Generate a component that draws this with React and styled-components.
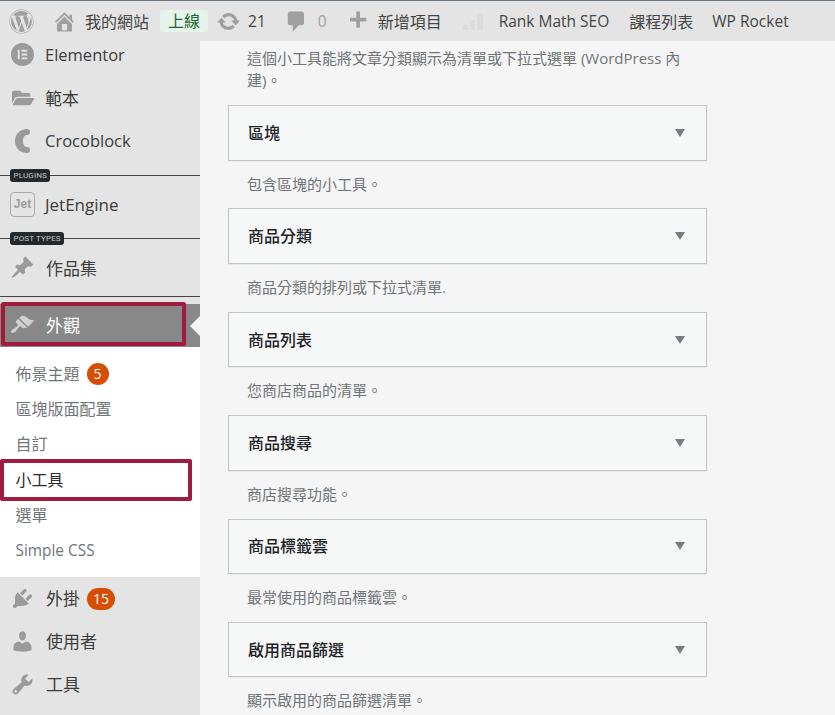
import React from "react";
import styled, { createGlobalStyle } from "styled-components";
import { FaWordpress, FaFolderOpen } from "react-icons/fa";
import { SiElementor } from "react-icons/si";

const Global = createGlobalStyle`
  html, body { margin: 0; padding: 0; background: #f5f5f5; }
  body { font-family: "Open Sans", "Noto Sans CJK TC", sans-serif; overflow: hidden; }
  #root { width: 835px; height: 715px; overflow: hidden; }
`;

const Page = styled.div`
  width: 835px;
  height: 715px;
  display: flex;
  flex-direction: column;
  overflow: hidden;
`;

const TopBar = styled.header`
  flex: 0 0 41px;
  box-sizing: border-box;
  border-top: 1px solid #6a7883;
  background: #e4e4e4;
  display: flex;
  align-items: center;
  padding-left: 9px;
  color: #454545;
  font-size: 16px;
`;

const BarItem = styled.div`
  display: flex;
  align-items: center;
  gap: ${p => p.$gap ?? 8}px;
  margin-left: ${p => p.$ml ?? 0}px;
  font-size: ${p => p.$latin ? "15.5px" : "16px"};
  color: ${p => p.$muted ? "#a0a0a0" : "inherit"};
  white-space: nowrap;
  svg { color: #a0a0a0; flex: none; }
`;

const LiveBadge = styled.span`
  margin-left: 11px;
  padding: 0 8px;
  height: 22px;
  line-height: 22px;
  border-radius: 3px;
  background: #e6f3ea;
  color: #1c6a33;
  font-size: 16px;
`;

const Body = styled.div`
  flex: 1;
  display: flex;
  min-height: 0;
`;

const Sidebar = styled.nav`
  flex: 0 0 200px;
  background: #e4e4e4;
  overflow: hidden;
  color: #3c3c3c;
  font-size: 17px;
`;

const SideInner = styled.div`
  margin-top: -8px;
`;

const Item = styled.div`
  position: relative;
  height: ${p => p.$h ?? 43}px;
  display: flex;
  align-items: center;
  box-sizing: border-box;
  font-size: ${p => p.$latin ? "16.5px" : "17px"};
  ${p => p.$active && `background: #888888; color: #fff;`}
`;

const Label = styled.span`
  margin-bottom: ${p => p.$up ? 2 : 0}px;
  margin-left: ${p => p.$nudge ? 1 : 0}px;
`;

const IconSlot = styled.span`
  flex: 0 0 45px;
  display: flex;
  justify-content: center;
  color: ${p => p.$active ? "#d0d0d0" : "#9a9a9a"};
`;

const Notch = styled.span`
  position: absolute;
  right: 0;
  top: 12px;
  border: 10px solid transparent;
  border-right-color: #f5f5f5;
  border-left-width: 0;
`;

const Highlight = styled.span`
  position: absolute;
  box-sizing: border-box;
  left: ${p => p.$l}px;
  top: ${p => p.$t}px;
  width: ${p => p.$w}px;
  height: ${p => p.$h}px;
  border: 4px solid #a11b3e;
  border-radius: 2px;
  pointer-events: none;
`;

const Separator = styled.div`
  position: relative;
  height: ${p => p.$h}px;
  &::before {
    content: "";
    position: absolute;
    left: 0;
    right: 0;
    top: ${p => p.$top}px;
    border-top: 1px solid #444;
  }
`;

const SepTag = styled.span`
  position: absolute;
  left: 10px;
  top: ${p => p.$top - 6}px;
  height: 13px;
  line-height: 13px;
  padding: 0 3.5px;
  border-radius: 3px;
  background: #23282d;
  color: #c4c4c4;
  font-family: Roboto, sans-serif;
  font-size: 8px;
  letter-spacing: 0.15px;
  white-space: nowrap;
`;

const Submenu = styled.div`
  background: #fff;
  padding: 9px 0 9px;
`;

const SubItem = styled.div`
  position: relative;
  height: 35.4px;
  display: flex;
  align-items: center;
  padding-left: 15.5px;
  gap: 7px;
  font-size: ${p => p.$latin ? "15.4px" : "16px"};
  color: ${p => p.$current ? "#2a2a2a" : "#70757a"};
`;

const Count = styled.span`
  display: inline-block;
  min-width: 22px;
  box-sizing: border-box;
  height: 22px;
  line-height: 22px;
  padding: 0 ${p => p.$wide ? 6 : 0}px;
  margin-left: ${p => p.$ml ?? 0}px;
  border-radius: 11px;
  background: #d54e04;
  color: #fff;
  font-size: 14px;
  text-align: center;
`;

const Main = styled.main`
  flex: 1;
  background: #f5f5f5;
  padding-left: 28px;
  overflow: hidden;
`;

const LeadText = styled.p`
  margin: 6px 0 0 19px;
  width: 436px;
  font-size: 15px;
  line-height: 22px;
  color: #6f7478;
`;

const WidgetList = styled.div`
  margin-top: 14px;
`;

const WidgetCard = styled.div`
  width: 479px;
  height: 55.5px;
  box-sizing: border-box;
  background: #f6f7f7;
  border: 1px solid #c3c4c7;
  box-shadow: 0 1px 1px rgba(0,0,0,.04);
  padding: 0 21px 0 19px;
  display: flex;
  align-items: center;
  justify-content: space-between;
  font-size: 16px;
  font-weight: 500;
  color: #1d2327;
`;

const CardTitle = styled.span`
  margin-bottom: 2px;
`;

const Caret = styled.span`
  border-left: 5px solid transparent;
  border-right: 5px solid transparent;
  border-top: 8px solid #787c82;
`;

const Desc = styled.p`
  margin: 0 0 0 19px;
  height: 47.9px;
  line-height: 47px;
  font-size: 15px;
  color: #6f7478;
`;

const JetLogo = styled.span`
  width: 25px;
  height: 25px;
  box-sizing: border-box;
  border: 1px solid #a8a8a8;
  border-radius: 4px;
  font: 700 12px "Liberation Sans", sans-serif;
  color: #9c9c9c;
  display: flex;
  align-items: center;
  justify-content: center;
`;

const Dash = ({ d, size = 24, color = "currentColor" }) => (
  <svg width={size} height={size} viewBox="0 0 20 20" fill={color}><path d={d} /></svg>
);

const HOME = "M16 8.5l1.53 1.53-1.06 1.06L10 4.62l-6.47 6.47-1.06-1.06L10 2.5l4 4v-2h2v4zm-6-2.46l6 5.99V18H4v-5.97zM12 17v-5H8v5h4z";
const UPDATE = "M10.2 3.28c3.53 0 6.43 2.61 6.92 6h2.08l-3.5 4-3.5-4h2.32c-.45-1.97-2.21-3.45-4.32-3.45-1.45 0-2.73.71-3.54 1.78L4.95 5.66C6.23 4.2 8.11 3.28 10.2 3.28zm-.4 13.44c-3.52 0-6.43-2.61-6.92-6H.8l3.5-4c1.17 1.33 2.33 2.67 3.5 4H5.48c.45 1.97 2.21 3.45 4.32 3.45 1.45 0 2.73-.71 3.54-1.78l1.71 1.95c-1.28 1.46-3.15 2.38-5.25 2.38z";
const COMMENT = "M5 2h9c1.1 0 2 .9 2 2v7c0 1.1-.9 2-2 2h-2l-5 5v-5H5c-1.1 0-2-.9-2-2V4c0-1.1.9-2 2-2z";
const PLUS = "M17 7v3h-5v5H9v-5H4V7h5V2h3v5h5z";
const PIN = "M10.44 3.02l1.82-1.82 6.36 6.35-1.83 1.82c-1.05-.68-2.48-.57-3.41.36l-.75.75c-.92.93-1.04 2.35-.35 3.41l-1.83 1.82-2.41-2.41-2.8 2.79c-.42.42-3.38 2.71-3.8 2.29s1.86-3.39 2.28-3.81l2.79-2.79L4.1 9.36l1.83-1.82c1.05.69 2.48.57 3.4-.36l.75-.75c.93-.92 1.05-2.35.36-3.41z";
const BRUSH = "M14.48 11.06L7.41 3.99l1.5-1.5c.5-.56 2.3-.47 3.51.32 1.21.8 1.43 1.28 2.91 2.1 1.18.64 2.45 1.26 4.45.85zm-.71.71L6.7 4.7 4.93 6.47c-.39.39-.39 1.02 0 1.41l1.06 1.06c.39.39.39 1.03 0 1.42-.6.6-1.43 1.11-2.21 1.69-.35.26-.7.53-1.01.84C1.43 13.23.4 14.92 1.2 15.71c.79.8 2.48-.23 3.82-1.57.31-.31.58-.66.84-1.01.58-.78 1.09-1.61 1.69-2.21.39-.39 1.02-.39 1.41 0l1.06 1.06c.39.39 1.02.39 1.41 0z";
const PLUG = "M13.11 4.36L9.87 7.6 8 5.73l3.24-3.24c.35-.34 1.05-.2 1.56.32.52.51.66 1.21.31 1.55zm-8 1.77l.91-1.12 9.01 9.01-1.19.84c-.71.71-2.63 1.16-3.82 1.16H6.14L4.9 17.26c-.59.59-1.54.59-2.12 0-.59-.58-.59-1.53 0-2.12l1.24-1.24v-3.88c0-1.13.4-3.19 1.09-3.89zm7.26 3.97l3.24-3.24c.34-.35 1.04-.21 1.55.31.52.51.66 1.21.31 1.55l-3.24 3.25z";
const USER = "M10 9.25c-2.27 0-2.73-3.44-2.73-3.44C7 4.02 7.82 2 9.97 2c2.16 0 2.98 2.02 2.71 3.81 0 0-.41 3.44-2.68 3.44zm0 2.57L12.72 10c2.39 0 4.52 2.33 4.52 4.53v2.49s-3.65 1.13-7.24 1.13c-3.65 0-7.24-1.13-7.24-1.13v-2.49c0-2.25 1.94-4.48 4.47-4.48z";
const TOOLS = "M16.68 9.77c-1.34 1.34-3.3 1.67-4.95.99l-5.41 6.52c-.99.99-2.59.99-3.58 0s-.99-2.59 0-3.57l6.52-5.42c-.68-1.65-.35-3.61.99-4.95 1.28-1.28 3.12-1.62 4.72-1.06l-2.89 2.89 2.82 2.82 2.86-2.87c.53 1.58.18 3.39-1.08 4.65zM3.81 16.21c.4.39 1.04.39 1.43 0 .4-.4.4-1.04 0-1.43-.39-.4-1.03-.4-1.43 0-.39.39-.39 1.03 0 1.43z";

const CrocoLogo = () => (
  <svg width="15" height="24" viewBox="0 0 15 24">
    <path d="M12 0C5 0 0 5 0 12s5 12 12 12c2 0 3-1 3-3s-1-3-3-3c-2.500 0-4-2.500-4-6s1.500-6 4-6c2 0 3-1 3-3s-1-3-3-3z" fill="#9a9a9a" />
  </svg>
);

const RankChart = () => (
  <svg width="24" height="20" viewBox="0 0 24 20">
    <g fill="#dcdcdc">
      <rect x="1" y="14" width="5" height="5" />
      <rect x="8" y="9" width="5" height="10" />
      <rect x="15" y="3" width="6" height="16" />
    </g>
  </svg>
);

const widgets = [
  ["區塊", "包含區塊的小工具。"],
  ["商品分類", "商品分類的排列或下拉式清單."],
  ["商品列表", "您商店商品的清單。"],
  ["商品搜尋", "商店搜尋功能。"],
  ["商品標籤雲", "最常使用的商品標籤雲。"],
  ["啟用商品篩選", "顯示啟用的商品篩選清單。"],
];

export default function App() {
  return (
    <Page>
      <Global />
      <TopBar>
        <BarItem><FaWordpress size={25} /></BarItem>
        <BarItem $ml={18} $gap={8}><Dash d={HOME} size={25} />我的網站</BarItem>
        <LiveBadge>上線</LiveBadge>
        <BarItem $ml={8} $gap={7} $latin><Dash d={UPDATE} size={25} />21</BarItem>
        <BarItem $ml={18} $gap={9} $muted $latin><Dash d={COMMENT} size={25} />0</BarItem>
        <BarItem $ml={18} $gap={8}><Dash d={PLUS} size={25} />新增項目</BarItem>
        <BarItem $ml={20}><RankChart /></BarItem>
        <BarItem $ml={13} $latin>Rank Math SEO</BarItem>
        <BarItem $ml={20}>課程列表</BarItem>
        <BarItem $ml={19} $latin>WP Rocket</BarItem>
      </TopBar>
      <Body>
        <Sidebar>
          <SideInner>
            <Item $latin><IconSlot><SiElementor size={23} /></IconSlot>Elementor</Item>
            <Item><IconSlot><FaFolderOpen size={22} /></IconSlot>範本</Item>
            <Item $latin><IconSlot><CrocoLogo /></IconSlot>Crocoblock</Item>
            <Separator $h={0} $top={13}><SepTag $top={13}>PLUGINS</SepTag></Separator>
            <Item $h={84}><IconSlot><JetLogo>Jet</JetLogo></IconSlot>JetEngine</Item>
            <Separator $h={0} $top={-8}><SepTag $top={-8}>POST TYPES</SepTag></Separator>
            <Item $h={42}><IconSlot><Dash d={PIN} size={25} /></IconSlot><Label $nudge>作品集</Label></Item>
            <Separator $h={16} $top={8} />
            <Item $active>
              <IconSlot $active><Dash d={BRUSH} size={25} /></IconSlot><Label $up $nudge>外觀</Label>
              <Notch />
              <Highlight $l={1} $t={-2} $w={185} $h={44} />
            </Item>
            <Submenu>
              <SubItem><Label $up>佈景主題</Label><Count>5</Count></SubItem>
              <SubItem><Label $up>區塊版面配置</Label></SubItem>
              <SubItem><Label $up>自訂</Label></SubItem>
              <SubItem $current><Label $up>小工具</Label><Highlight $l={0} $t={-3} $w={192} $h={42} /></SubItem>
              <SubItem><Label $up>選單</Label></SubItem>
              <SubItem $latin>Simple CSS</SubItem>
            </Submenu>
            <Item><IconSlot><Dash d={PLUG} size={25} /></IconSlot><Label $up $nudge>外掛</Label><Count $wide $ml={7}>15</Count></Item>
            <Item><IconSlot><Dash d={USER} size={25} /></IconSlot><Label $up $nudge>使用者</Label></Item>
            <Item><IconSlot><Dash d={TOOLS} size={25} /></IconSlot><Label $up $nudge>工具</Label></Item>
          </SideInner>
        </Sidebar>
        <Main>
          <LeadText>這個小工具能將文章分類顯示為清單或下拉式選單 (WordPress 內建)。</LeadText>
          <WidgetList>
            {widgets.map(([t, d]) => (
              <React.Fragment key={t}>
                <WidgetCard><CardTitle>{t}</CardTitle><Caret /></WidgetCard>
                <Desc>{d}</Desc>
              </React.Fragment>
            ))}
          </WidgetList>
        </Main>
      </Body>
    </Page>
  );
}
